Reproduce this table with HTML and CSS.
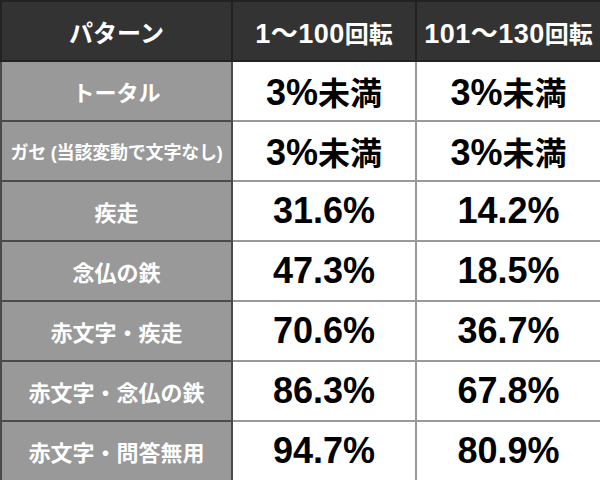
FILE: index.html
```html
<!DOCTYPE html>
<html lang="ja">
<head>
<meta charset="utf-8">
<link rel="stylesheet" href="styles.css">
</head>
<body>
<table class="rates">
  <colgroup>
    <col class="c-pattern">
    <col class="c-a">
    <col class="c-b">
  </colgroup>
  <thead>
    <tr>
      <th>パターン</th>
      <th><span class="num">1〜100</span>回転</th>
      <th><span class="num">101〜130</span>回転</th>
    </tr>
  </thead>
  <tbody>
    <tr><th>トータル</th><td>3%<span class="unit">未満</span></td><td>3%<span class="unit">未満</span></td></tr>
    <tr><th class="small">ガセ (当該変動で文字なし)</th><td>3%<span class="unit">未満</span></td><td>3%<span class="unit">未満</span></td></tr>
    <tr><th>疾走</th><td>31.6%</td><td>14.2%</td></tr>
    <tr><th>念仏の鉄</th><td>47.3%</td><td>18.5%</td></tr>
    <tr><th>赤文字・疾走</th><td>70.6%</td><td>36.7%</td></tr>
    <tr><th>赤文字・念仏の鉄</th><td>86.3%</td><td>67.8%</td></tr>
    <tr><th>赤文字・問答無用</th><td>94.7%</td><td>80.9%</td></tr>
  </tbody>
</table>
</body>
</html>
```

FILE: styles.css
```css
html, body {
  margin: 0;
  padding: 0;
  background: #ffffff;
}

.rates {
  width: 600px;
  height: 480px;
  border-collapse: collapse;
  table-layout: fixed;
  font-family: "Liberation Sans", "Noto Sans CJK JP", sans-serif;
  font-weight: bold;
}

.c-pattern { width: 231px; }
.c-a { width: 184px; }
.c-b { width: 185px; }

.rates tr { height: 60px; }

.rates th,
.rates td {
  padding: 0;
  text-align: center;
  vertical-align: middle;
  white-space: nowrap;
}

.rates thead th {
  background: #333333;
  color: #ffffff;
  font-size: 24px;
  border: 2px solid #222222;
}

.rates thead .num {
  font-size: 27px;
  letter-spacing: 0.5px;
}

.rates tbody th {
  background: #999999;
  color: #ffffff;
  font-size: 22px;
  border: 2px solid #4a4a4a;
}

.rates tbody th.small {
  font-size: 18px;
  letter-spacing: -0.2px;
}

.rates tbody td {
  background: #ffffff;
  color: #000000;
  font-size: 36px;
  border: 2px solid #999999;
}

.rates tbody td .unit {
  font-size: 32px;
}
```
